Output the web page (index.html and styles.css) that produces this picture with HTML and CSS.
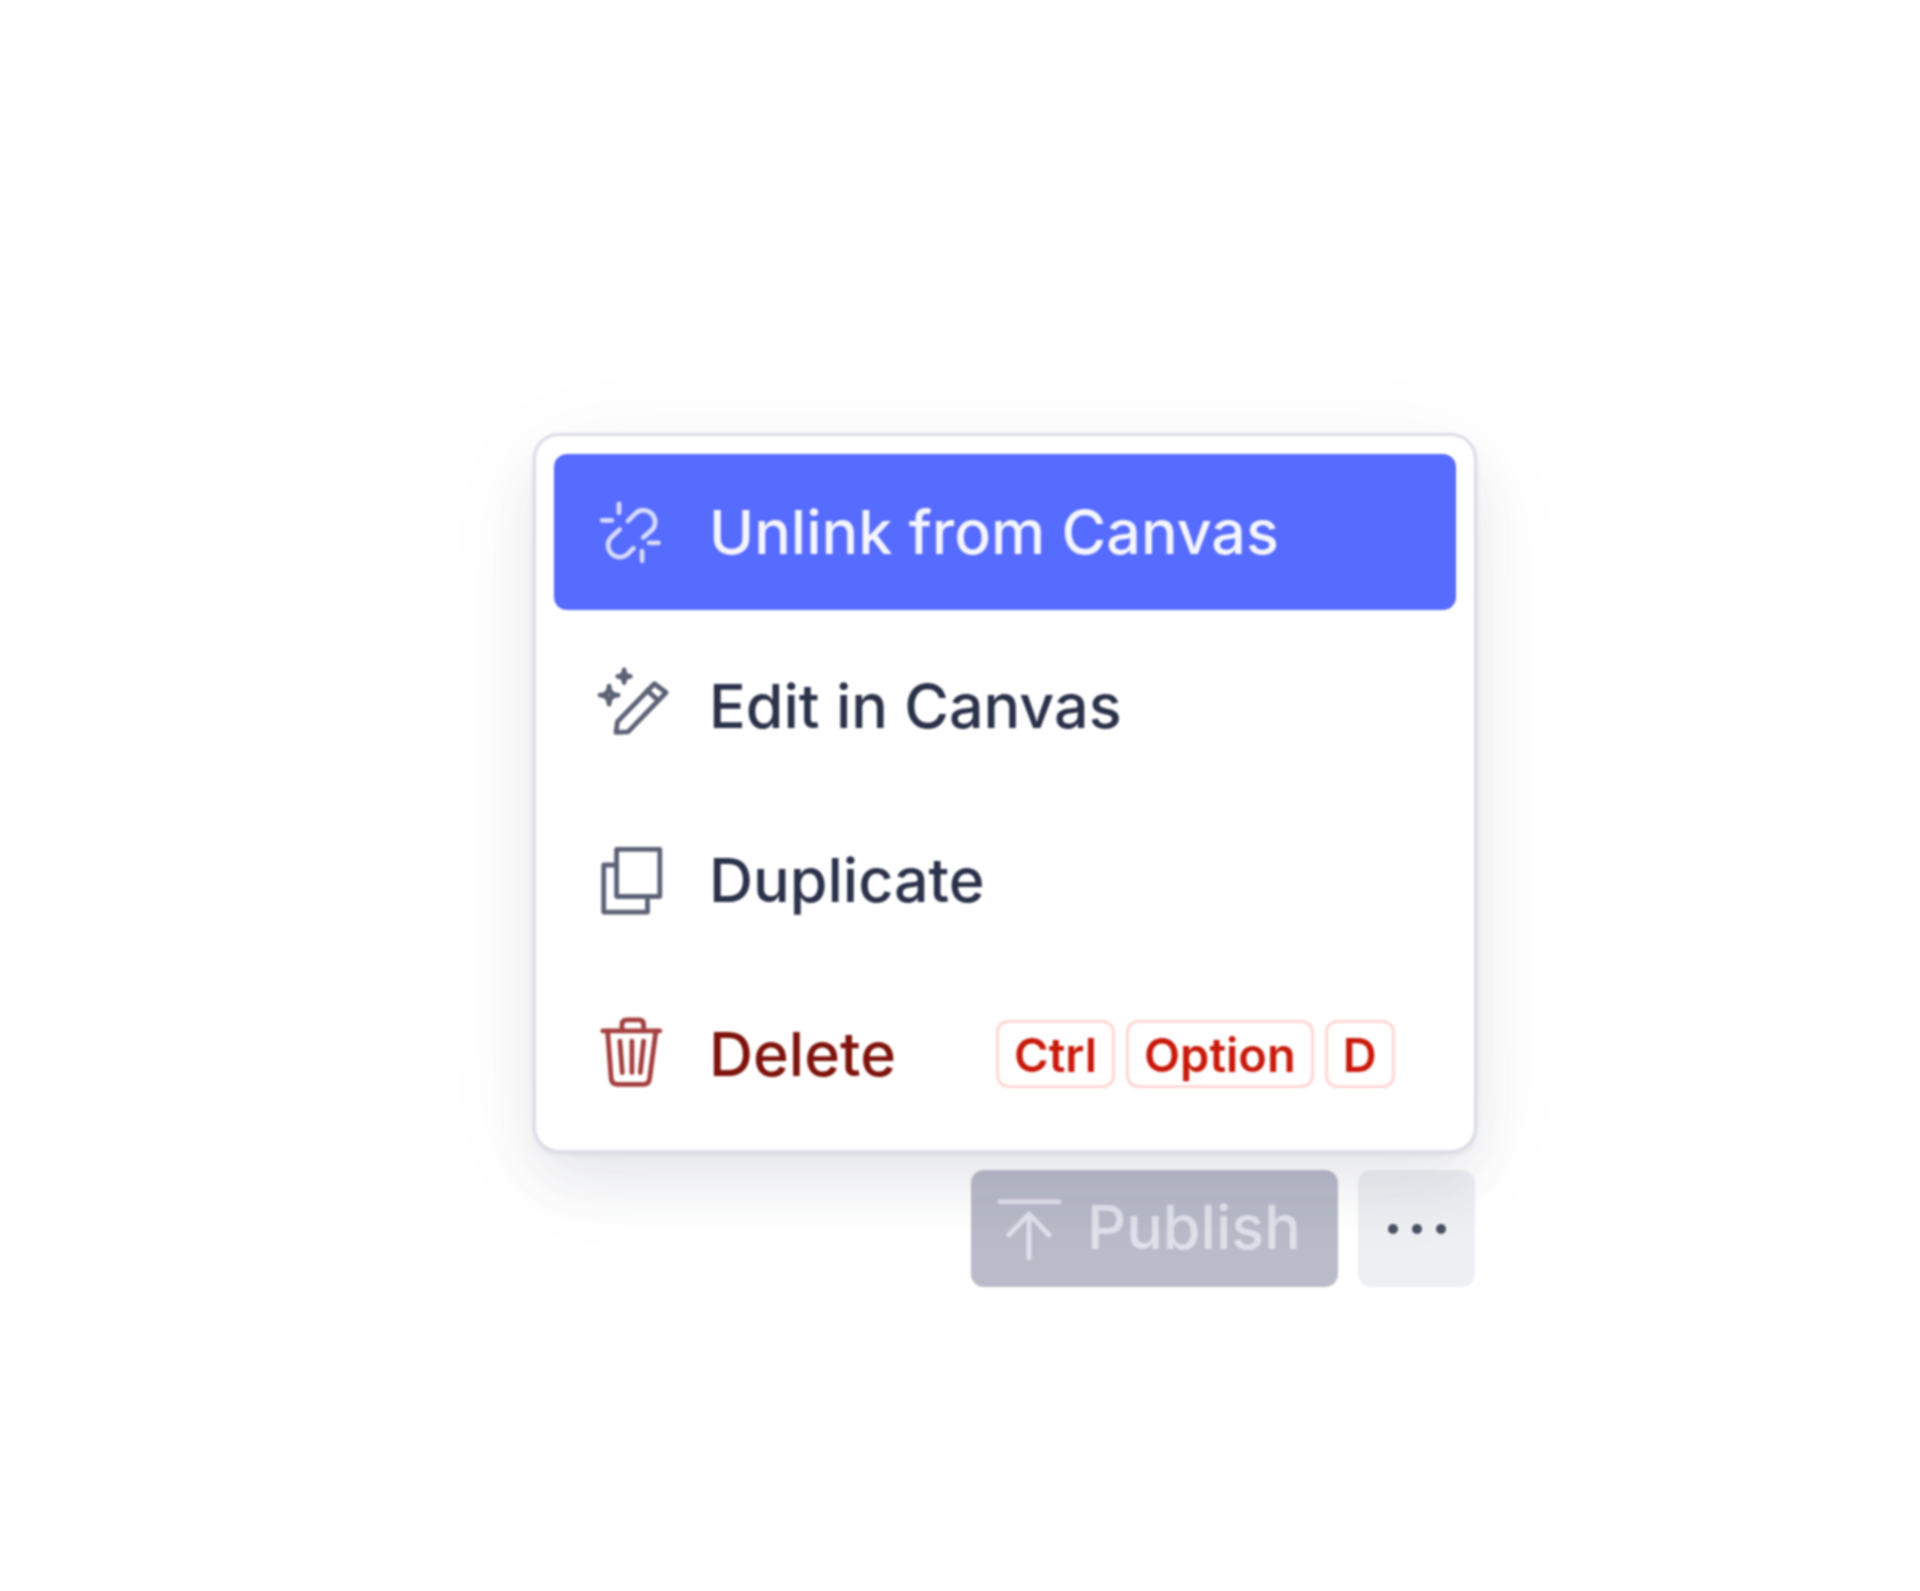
FILE: index.html
```html
<!DOCTYPE html>
<html lang="en">
  <head>
    <meta charset="utf-8">
    <title>Publish menu</title>
    <link rel="stylesheet" href="styles.css">
  </head>
  <body>
    <div class="stage">
      <ul class="menu">
        <li class="menu-item active">
          <svg class="icon" viewBox="0 0 24 24">
            <path d="M8 2.6v3M2.4 8.1h3.2M15.7 18.4v3.2M18 15.6h3.2"/>
            <path d="M11 8.3l2.6-2.6a3.9 3.9 0 0 1 5.5 5.5l-3 2.6"/>
            <path d="M8.2 11.2l-2.9 2.7a3.9 3.9 0 0 0 5.5 5.5l2-2"/>
          </svg>
          <span class="label">Unlink from Canvas</span>
        </li>
        <li class="menu-item">
          <svg class="icon" viewBox="0 0 24 24">
            <path d="M4.7 5.4Q4.7 8.4 1.7 8.4Q4.7 8.4 4.7 11.4Q4.7 8.4 7.7 8.4Q4.7 8.4 4.7 5.4Z"/>
            <path d="M9.7 0Q9.7 2.1 7.6 2.1Q9.7 2.1 9.7 4.2Q9.7 2.1 11.8 2.1Q9.7 2.1 9.7 0Z"/>
            <path d="M7 20.8l.5-3.6L19.8 4.6l3.9 2.9L11 20.6z"/>
            <path d="M17.4 6.8l3.6 3.3"/>
          </svg>
          <span class="label">Edit in Canvas</span>
        </li>
        <li class="menu-item">
          <svg class="icon" viewBox="0 0 24 24">
            <rect x="7.2" y="1.8" width="14.4" height="15.7"/>
            <path d="M7.2 7H2.9v15.7h14.6v-5.2"/>
          </svg>
          <span class="label">Duplicate</span>
        </li>
        <li class="menu-item danger">
          <svg class="icon" viewBox="0 0 24 24">
            <path d="M2.6 4.3h19"/>
            <path d="M9 4.3V2.2q0-1.6 1.6-1.6h4q1.6 0 1.6 1.6v2.1"/>
            <path d="M4.2 4.3l1.2 15.9q.2 1.9 2 1.9h9q1.6 0 1.8-1.9l2.1-15.9"/>
            <path d="M8.3 7.7l.8 10.5M12.3 7.7v10.5M16.2 7.7l-1.1 10.5"/>
          </svg>
          <span class="label">Delete</span>
          <span class="keys">
            <kbd>Ctrl</kbd>
            <kbd>Option</kbd>
            <kbd>D</kbd>
          </span>
        </li>
      </ul>
      <div class="actions">
        <button class="publish" type="button">
          <svg class="icon" viewBox="0 0 24 24">
            <path d="M2.3 2.9H22M12 21.7V7M5.3 14L12 7l6.7 7"/>
          </svg>
          Publish
        </button>
        <button class="more" type="button">
          <i></i><i></i><i></i>
        </button>
      </div>
    </div>
  </body>
</html>
```

FILE: styles.css
```css
html, body {
  margin: 0;
  background: #fff;
}
body {
  height: 1591px;
  overflow: hidden;
  font-family: "Inter", sans-serif;
}
.stage {
  width: 944px;
  margin-left: 533px;
  padding-top: 433px;
  display: flex;
  flex-direction: column;
  gap: 17px;
  filter: blur(1px);
}
/* sits above the buttons so its shadow falls over them */
.menu {
  position: relative;
  z-index: 1;
  list-style: none;
  margin: 0;
  padding: 18px;
  display: flex;
  flex-direction: column;
  gap: 18px;
  background: #fff;
  border: 3px solid #dcdde6;
  border-radius: 26px;
  box-shadow: 0 2px 4px rgba(60, 66, 100, 0.1), 0 30px 60px rgba(60, 66, 100, 0.09), 0 20px 110px rgba(60, 66, 100, 0.05);
}
.menu-item {
  height: 156px;
  display: flex;
  align-items: center;
  padding-left: 41px;
  border-radius: 13px;
  color: #2a3149;
}
.menu-item .icon {
  color: #5c6276;
}
.menu-item.active {
  background: #566bff;
  color: #f4f5ff;
}
.menu-item.active .icon {
  color: #d5daff;
}
.menu-item.danger {
  color: #7f130c;
}
.menu-item.danger .icon {
  color: #a33f3e;
}
.icon {
  width: 72px;
  height: 72px;
  flex: none;
  overflow: visible;
  fill: none;
  stroke: currentColor;
  stroke-width: 1.6;
  stroke-linecap: round;
  stroke-linejoin: round;
}
.label {
  margin-left: 42px;
  font-size: 61px;
  font-weight: 500;
}
.keys {
  display: flex;
  gap: 11px;
  margin-left: 100px;
}
kbd {
  height: 62px;
  padding: 0 15px;
  display: flex;
  align-items: center;
  border: 3px solid #ffd8d5;
  border-radius: 12px;
  font-family: "Inter", sans-serif;
  font-size: 47px;
  font-weight: 600;
  color: #c9190b;
}
.actions {
  display: flex;
  justify-content: flex-end;
  gap: 20px;
  padding-right: 2px;
}
.actions button {
  height: 117px;
  border: none;
  border-radius: 13px;
  font-family: "Inter", sans-serif;
}
.publish {
  width: 367px;
  padding: 0 0 3px 22px;
  display: flex;
  align-items: center;
  gap: 22px;
  background: #b9bbc9;
  color: #e0e1ea;
  font-size: 61px;
  font-weight: 500;
}
.publish .icon {
  margin-top: 3px;
}
.more {
  width: 117px;
  display: flex;
  align-items: center;
  justify-content: center;
  gap: 14px;
  padding: 0;
  background: #eeeff2;
}
.more i {
  width: 10px;
  height: 10px;
  border-radius: 50%;
  background: #4b5064;
}
```
